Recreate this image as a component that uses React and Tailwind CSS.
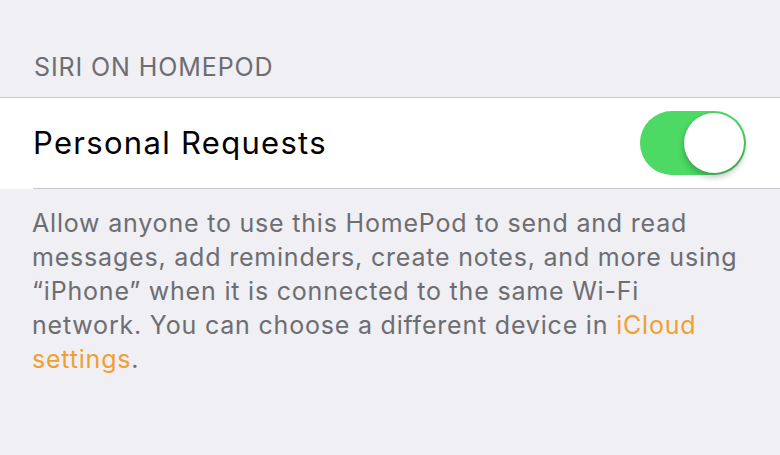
import React from 'react';

function Toggle() {
  return (
    <div className="relative w-[106px] h-[64px] rounded-full bg-[#4cd964]">
      <div className="absolute right-[2px] top-[2px] w-[60px] h-[60px] rounded-full bg-white shadow-[0_4px_6px_rgba(0,0,0,0.25),0_0_1px_rgba(0,0,0,0.2)]" />
    </div>
  );
}

export default function App() {
  return (
    <div className="w-[780px] h-[455px] bg-[#efeff4] overflow-hidden font-['Inter',sans-serif]">
      <div className="pt-[51px] pb-[14px] pl-[34px] text-[25px] leading-[32px] tracking-[0.9px] text-[#6d6d72]">
        SIRI ON HOMEPOD
      </div>
      <div className="bg-white border-t border-[#c8c7cc]">
        <div className="flex items-center justify-between h-[91px] ml-[33px] pr-[34px] border-b border-[#c8c7cc]">
          <span className="text-[31px] tracking-[1.3px] text-black">Personal Requests</span>
          <Toggle />
        </div>
      </div>
      <p className="pt-[17px] pl-[32px] text-[25px] leading-[34px] tracking-[0.8px] text-[#6d6d72]">
        Allow anyone to use this HomePod to send and read<br />
        messages, add reminders, create notes, and more using<br />
        “iPhone” when it is connected to the same Wi-Fi<br />
        network. You can choose a different device in <span className="text-[#f0a030]">iCloud</span><br />
        <span className="text-[#f0a030]">settings</span>.
      </p>
    </div>
  );
}
